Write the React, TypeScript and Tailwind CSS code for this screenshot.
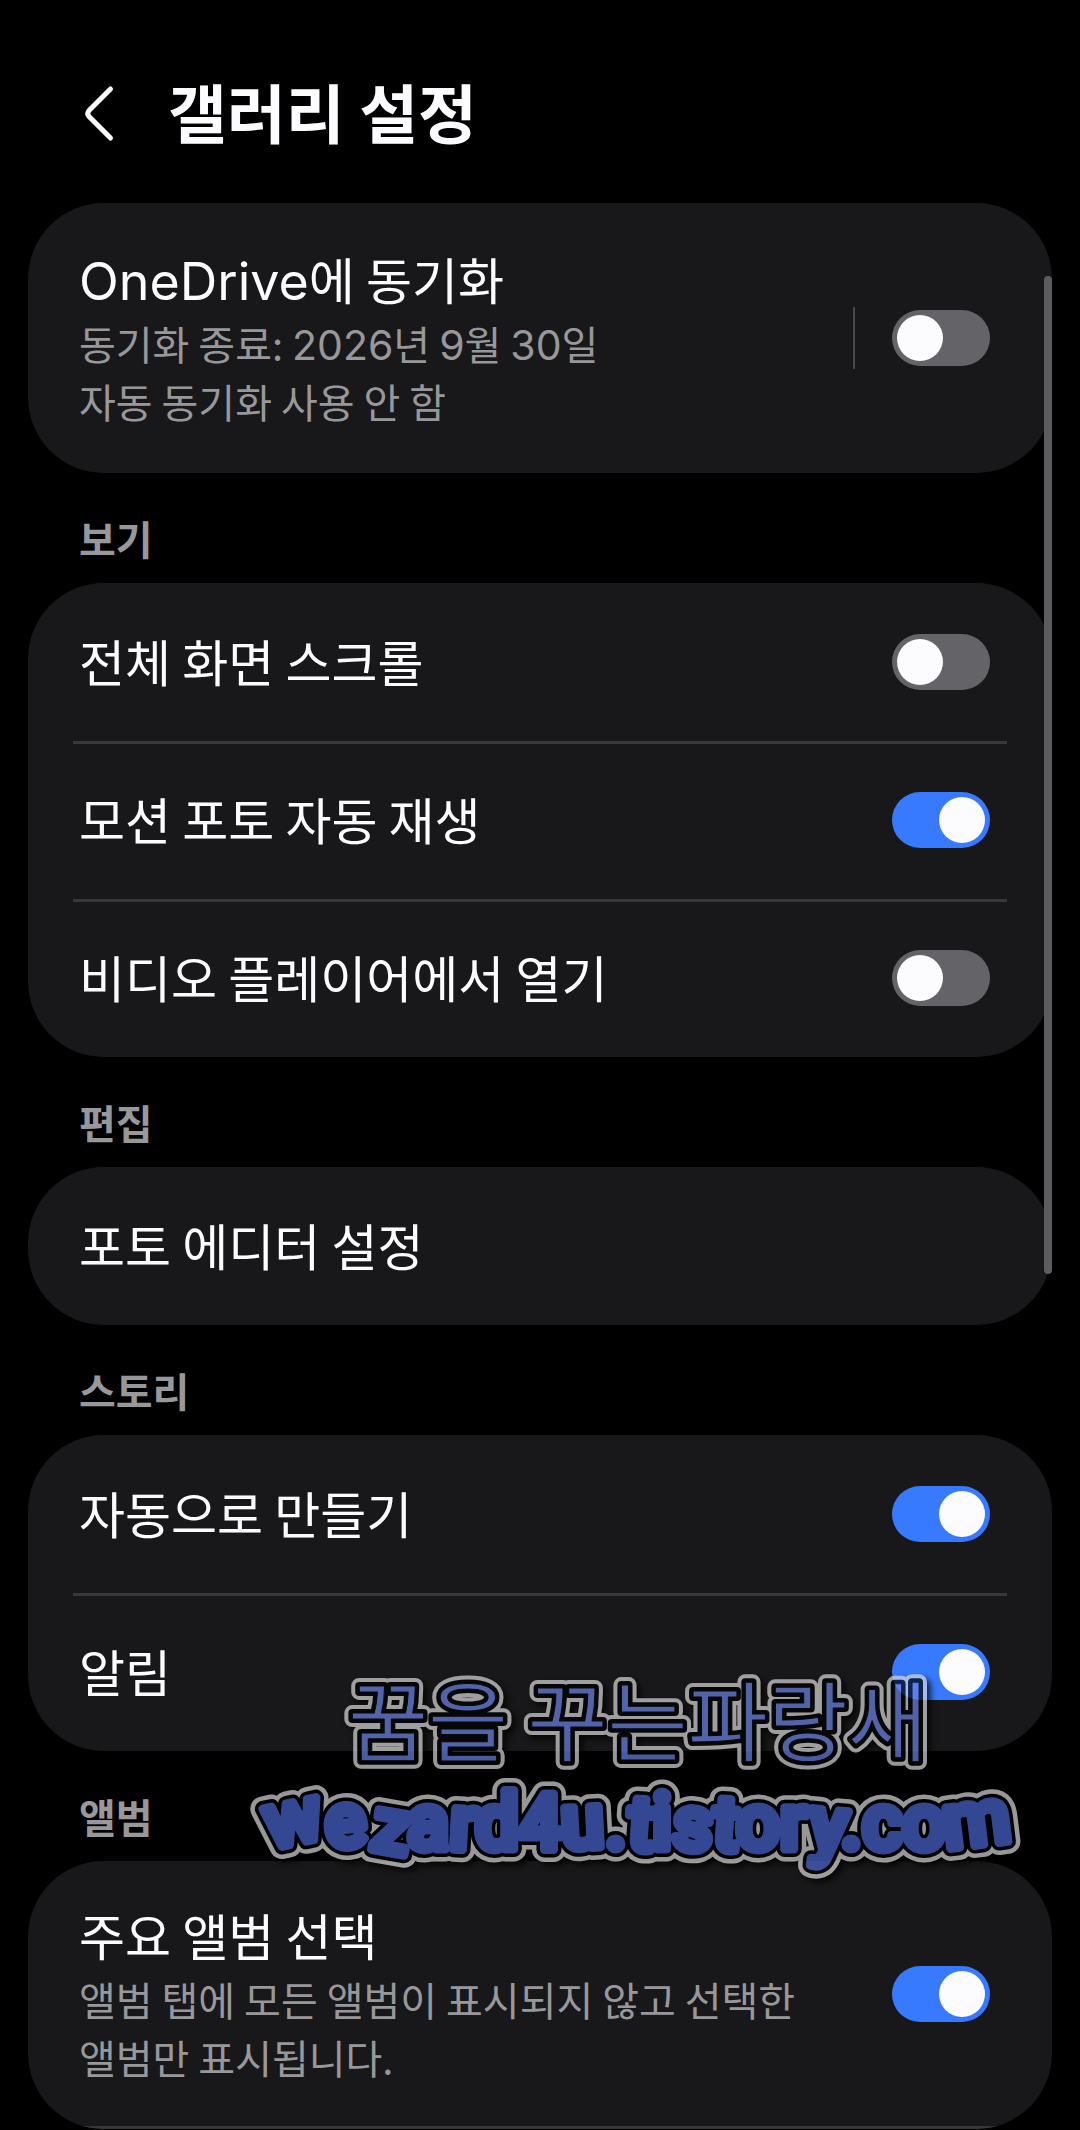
import { ReactNode } from "react";
import clsx from "clsx";

interface SwitchProps {
  id: string;
  on?: boolean;
  label?: string;
}

const Switch = ({ id, on = false, label }: SwitchProps) => {
  return (
    <input
      id={id}
      type="checkbox"
      role="switch"
      aria-label={label}
      defaultChecked={on}
      className="relative h-14 w-[98px] shrink-0 cursor-pointer appearance-none rounded-full bg-[#646468] p-[5px] before:block before:size-[46px] before:rounded-full before:bg-[#fcfcff] checked:bg-[#387aff] checked:before:ml-auto"
    />
  );
};

const rowClass = "mx-[45px] flex items-center pl-[6px] pr-[17px]";
const dividerClass = "shadow-[inset_0_3px_0_#38383a]";
const titleClass = "block text-[50px] leading-[72px] text-[#fcfcff]";
const descClass = "block text-[40px] leading-[58px] text-[#98989b]";
// digits are set in a wider face than the Hangul
const digitClass = "font-['Inter'] text-[41px] leading-none";

const Card = ({ children }: { children: ReactNode }) => {
  return <div className="overflow-hidden rounded-[76px] bg-[#18181a]">{children}</div>;
};

const SectionTitle = ({ children }: { children: ReactNode }) => {
  return (
    <h2 className="px-[51px] pt-[36px] pb-[16px] text-[40px] leading-[58px] font-bold text-[#98989b]">{children}</h2>
  );
};

interface SwitchRowProps {
  id: string;
  title: string;
  on?: boolean;
  divider?: boolean;
}

const SwitchRow = ({ id, title, on, divider }: SwitchRowProps) => {
  return (
    <div className={clsx(rowClass, "min-h-[158px] gap-8", divider && dividerClass)}>
      <label htmlFor={id} className={clsx(titleClass, "flex-1 pb-1")}>
        {title}
      </label>
      <Switch id={id} on={on} />
    </div>
  );
};

const Watermark = () => {
  return (
    <svg
      className="pointer-events-none absolute right-0 bottom-[230px] overflow-visible opacity-70 drop-shadow-[4px_4px_3px_#000]"
      width="840"
      height="240"
      viewBox="0 0 840 240"
      strokeLinejoin="round"
      strokeLinecap="round"
    >
      <g fontSize="87" fontFamily="'Noto Sans CJK KR', sans-serif">
        <use href="#mark-name" fill="#d8d8d8" stroke="#d8d8d8" strokeWidth="16" />
        <use href="#mark-name" fill="#000" stroke="#000" strokeWidth="8" />
        <g fill="#6a84e6" stroke="#000" strokeWidth="1">
          <text id="mark-name" x="108" y="95">
            꿈을 꾸는파랑새
          </text>
        </g>
      </g>
      <g fontSize="77" fontWeight="500" fontFamily="Roboto, sans-serif">
        <use href="#mark-site" fill="#d8d8d8" stroke="#d8d8d8" strokeWidth="25" />
        <use href="#mark-site" fill="#000" stroke="#000" strokeWidth="16" />
        <g fill="#4a66d0" stroke="#4a66d0" strokeWidth="9">
          <text id="mark-site" x="30" y="189" rotate="-12 -6 10 0 3 0 0 -3 0 4 0 3 4 0 0 5 0 0 0 -7">
            wezard4u.tistory.com
          </text>
        </g>
      </g>
    </svg>
  );
};

export default function App() {
  return (
    <div className="relative min-h-screen overflow-hidden bg-black px-7 font-['Noto_Sans_CJK_KR',sans-serif]">
      <header className="flex items-center gap-[46px] pt-16 pr-7 pb-[43px] pl-[48px]">
        <button type="button" aria-label="뒤로" className="py-4">
          <svg width="46" height="64" viewBox="0 0 46 64" fill="none" stroke="#fcfcff" strokeWidth="5">
            <path d="M34.5 9 L13 30.5 Q10.5 33.5 13 36.5 L34.5 58" strokeLinecap="round" strokeLinejoin="round" />
          </svg>
        </button>
        <h1 className="pb-1 text-[64px] leading-[92px] font-bold text-[#fcfcff]">갤러리 설정</h1>
      </header>

      <main>
        <Card>
          <div className={clsx(rowClass, "min-h-[270px] py-[36px]")}>
            <button type="button" className="flex-1 pb-1 text-left break-keep">
              <span className={titleClass}>
                <span className="font-['Inter'] text-[52px] leading-none">OneDrive</span>에 동기화
              </span>
              <span className={descClass}>
                동기화 종료: <span className={digitClass}>2026</span>년 <span className={digitClass}>9</span>월{" "}
                <span className={digitClass}>30</span>일
              </span>
              <span className={descClass}>자동 동기화 사용 안 함</span>
            </button>
            <span className="mr-[37px] h-[62px] w-[2px] bg-[#48484a]" />
            <Switch id="onedrive" label="OneDrive에 동기화" />
          </div>
        </Card>

        <SectionTitle>보기</SectionTitle>
        <Card>
          <SwitchRow id="fullscreen-scroll" title="전체 화면 스크롤" />
          <SwitchRow id="motion-photo" title="모션 포토 자동 재생" on divider />
          <SwitchRow id="video-player" title="비디오 플레이어에서 열기" divider />
        </Card>

        <SectionTitle>편집</SectionTitle>
        <Card>
          <div className={clsx(rowClass, "min-h-[158px]")}>
            <button type="button" className={clsx(titleClass, "flex-1 pb-1 text-left")}>
              포토 에디터 설정
            </button>
          </div>
        </Card>

        <SectionTitle>스토리</SectionTitle>
        <Card>
          <SwitchRow id="auto-create" title="자동으로 만들기" on />
          <SwitchRow id="notifications" title="알림" on divider />
        </Card>

        <SectionTitle>앨범</SectionTitle>
        <Card>
          <div className={clsx(rowClass, "min-h-[265px] gap-8 py-[36px]")}>
            <label htmlFor="main-albums" className="flex-1 pb-1 break-keep">
              <span className={titleClass}>주요 앨범 선택</span>
              <span className={descClass}>앨범 탭에 모든 앨범이 표시되지 않고 선택한 앨범만 표시됩니다.</span>
            </label>
            <Switch id="main-albums" on />
          </div>
          <div className="mx-[45px] h-[3px] bg-[#38383a]" />
        </Card>
      </main>

      <div className="absolute top-[276px] right-7 h-[998px] w-2 rounded-full bg-[#5c5c5e]" />
      <Watermark />
    </div>
  );
}
